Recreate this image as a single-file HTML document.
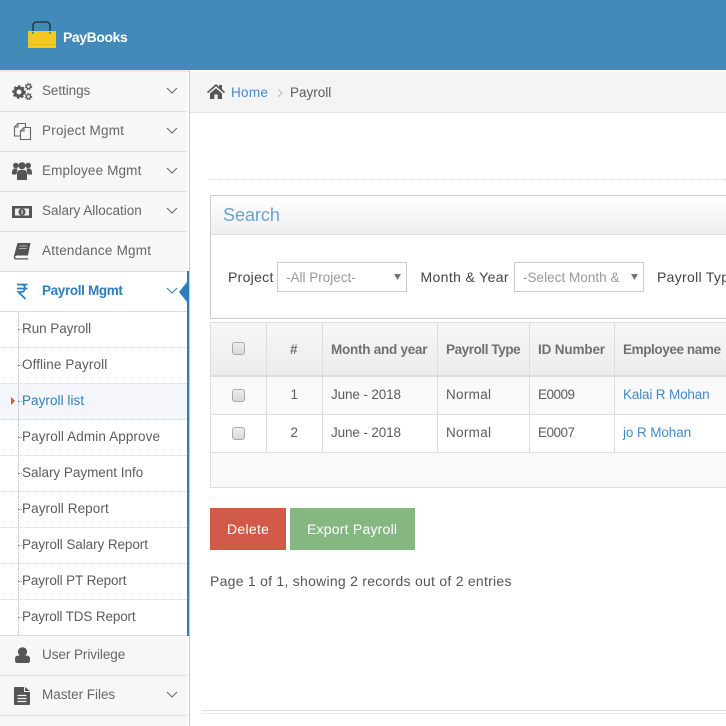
<!DOCTYPE html>
<html><head><meta charset="utf-8">
<style>
html,body{margin:0;padding:0;width:726px;height:726px;overflow:hidden;background:#fff}
body{position:relative;font-family:"Liberation Sans",sans-serif;font-size:13.5px;color:#5c5c5c}
.a{position:absolute}
.t{position:absolute;white-space:nowrap;line-height:18px;letter-spacing:.3px}
.m{position:absolute;left:0;width:187px;height:39px;background:#f7f7f7;border-bottom:1px solid #ddd}
.s{position:absolute;left:0;width:187px;height:35px;background:#fff;border-bottom:1px dotted #d4d4d4}
.h{position:absolute;left:18px;width:4px;height:0;border-top:1px dotted #999}
.cb{position:absolute;width:11px;height:11px;border:1px solid #aaa;border-radius:3px;background:linear-gradient(#eee,#d8d8d8)}
.v{position:absolute;width:1px;background:#ddd}
svg{position:absolute}
.th{color:#707070;font-weight:bold}
</style></head><body>
<div class="a" style="left:0;top:0;width:726px;height:70px;background:#428bb9"></div>
<svg style="left:26px;top:20px" width="32" height="30" viewBox="0 0 32 30"><path d="M7 11V6Q7 2 11 2H20Q24 2 24 6V11" fill="none" stroke="#1d2a33" stroke-width="1.300"/><rect x="2" y="11" width="28" height="17" fill="#f4c81c"/><rect x="2" y="24" width="28" height="1" fill="#e2bc20"/><rect x="6" y="12" width="2" height="2" fill="#5a8fa8"/><rect x="23" y="12" width="2" height="2" fill="#5a8fa8"/></svg>
<div class="t" style="left:63px;top:28px;color:#fff;font-weight:bold;font-size:14px;letter-spacing:-.42px">PayBooks</div>

<div class="a" style="left:0;top:70px;width:187px;height:656px;background:#f7f7f7"></div>
<div class="a" style="left:189px;top:70px;width:1px;height:656px;background:#ccc"></div>
<div class="a" style="left:0;top:70px;width:189px;height:2px;background:#e8e8e8"></div>

<div class="m" style="top:72px"></div><div class="m" style="top:112px"></div><div class="m" style="top:152px"></div><div class="m" style="top:192px"></div><div class="m" style="top:232px"></div>
<div class="a" style="left:0;top:272px;width:187px;height:39px;background:#fff;border-bottom:1px solid #ddd"></div>
<div class="s" style="top:312px"></div><div class="s" style="top:348px"></div><div class="s" style="top:384px;background:#f4f6fb"></div><div class="s" style="top:420px"></div><div class="s" style="top:456px"></div><div class="s" style="top:492px"></div><div class="s" style="top:528px"></div><div class="s" style="top:564px"></div><div class="a" style="left:0;top:600px;width:187px;height:35px;background:#fff;border-bottom:1px solid #ddd"></div>
<div class="m" style="top:636px"></div><div class="m" style="top:676px"></div>

<div class="a" style="left:187px;top:271px;width:2px;height:365px;background:#2d7ebd"></div>
<svg style="left:179px;top:281px" width="10" height="22"><path d="M0 11L8 1V21Z" fill="#2d7ebd"/></svg>
<div class="a" style="left:18px;top:312px;height:323px;border-left:1px dotted #8fbde0"></div>

<div class="t" style="left:42px;top:82px;color:#666;letter-spacing:-.07px">Settings</div>
<div class="t" style="left:42px;top:122px;color:#666;letter-spacing:.22px">Project Mgmt</div>
<div class="t" style="left:42px;top:162px;color:#666;letter-spacing:.15px">Employee Mgmt</div>
<div class="t" style="left:42px;top:202px;color:#666;letter-spacing:0">Salary Allocation</div>
<div class="t" style="left:42px;top:242px;color:#666;letter-spacing:.23px">Attendance Mgmt</div>
<div class="t" style="left:42px;top:282px;color:#2d7ebd;font-weight:bold;letter-spacing:-.35px">Payroll Mgmt</div>
<div class="t" style="left:22px;top:320px;letter-spacing:-.06px">Run Payroll</div>
<div class="t" style="left:22px;top:356px;letter-spacing:.1px">Offline Payroll</div>
<div class="t" style="left:22px;top:392px;color:#2d7ebd;letter-spacing:.05px">Payroll list</div>
<div class="t" style="left:22px;top:428px;letter-spacing:.11px">Payroll Admin Approve</div>
<div class="t" style="left:22px;top:464px;letter-spacing:-.02px">Salary Payment Info</div>
<div class="t" style="left:22px;top:500px;letter-spacing:.09px">Payroll Report</div>
<div class="t" style="left:22px;top:536px;letter-spacing:-.08px">Payroll Salary Report</div>
<div class="t" style="left:22px;top:572px;letter-spacing:-.11px">Payroll PT Report</div>
<div class="t" style="left:22px;top:608px;letter-spacing:-.14px">Payroll TDS Report</div>
<div class="t" style="left:42px;top:646px;color:#666;letter-spacing:-.06px">User Privilege</div>
<div class="t" style="left:42px;top:686px;color:#666;letter-spacing:-.03px">Master Files</div>
<div class="h" style="top:329px"></div><div class="h" style="top:365px"></div><div class="h" style="top:401px"></div><div class="h" style="top:437px"></div><div class="h" style="top:473px"></div><div class="h" style="top:509px"></div><div class="h" style="top:545px"></div><div class="h" style="top:581px"></div><div class="h" style="top:617px"></div>
<svg style="left:10px;top:397px" width="6" height="8"><path d="M1 0L5 4L1 8Z" fill="#c8603a"/></svg>

<svg style="left:166px;top:87px" width="12" height="8"><path d="M1 1L6 6L11 1" fill="none" stroke="#666" stroke-width="1"/></svg>
<svg style="left:166px;top:127px" width="12" height="8"><path d="M1 1L6 6L11 1" fill="none" stroke="#666" stroke-width="1"/></svg>
<svg style="left:166px;top:167px" width="12" height="8"><path d="M1 1L6 6L11 1" fill="none" stroke="#666" stroke-width="1"/></svg>
<svg style="left:166px;top:207px" width="12" height="8"><path d="M1 1L6 6L11 1" fill="none" stroke="#666" stroke-width="1"/></svg>
<svg style="left:166px;top:287px" width="12" height="8"><path d="M1 1L6 6L11 1" fill="none" stroke="#2d7ebd" stroke-width="1"/></svg>
<svg style="left:166px;top:691px" width="12" height="8"><path d="M1 1L6 6L11 1" fill="none" stroke="#666" stroke-width="1"/></svg>

<svg style="left:12px;top:82px" width="21" height="19" viewBox="0 0 21 19"><circle cx="7" cy="10" r="4" fill="none" stroke="#555" stroke-width="3"/><circle cx="7" cy="10" r="6" fill="none" stroke="#555" stroke-width="1.500" stroke-dasharray="2.500 2"/><circle cx="16.500" cy="4.500" r="2" fill="none" stroke="#555" stroke-width="1.300"/><circle cx="16.500" cy="4.500" r="3.200" fill="none" stroke="#555" stroke-width="1" stroke-dasharray="1.500 1.200"/><circle cx="16.500" cy="14.500" r="2" fill="none" stroke="#555" stroke-width="1.300"/><circle cx="16.500" cy="14.500" r="3.200" fill="none" stroke="#555" stroke-width="1" stroke-dasharray="1.500 1.200"/></svg>
<svg style="left:13px;top:121px" width="19" height="20" viewBox="0 0 19 20"><path d="M7 15H1.500V6L5 2.500H12.500V6.500M5 2.500V6H1.500" fill="none" stroke="#666" stroke-width="1.100"/><path d="M7.500 18.500V10L11 6.500H17.500V18.500Z M11 6.500V10H7.500" fill="none" stroke="#666" stroke-width="1.100"/></svg>
<svg style="left:12px;top:162px" width="20" height="18" viewBox="0 0 20 18"><circle cx="3.800" cy="3.500" r="2.800" fill="#555"/><circle cx="16.200" cy="3.500" r="2.800" fill="#555"/><circle cx="10" cy="3.800" r="3.600" fill="#555"/><path d="M0 11Q0 6.500 3 6.500H5.500L4.500 12.500H0ZM20 11Q20 6.500 17 6.500H14.500L15.500 12.500H20Z" fill="#555"/><path d="M5 18V12Q5 8 8 8H12Q15 8 15 12V18Z" fill="#555"/></svg>
<svg style="left:12px;top:205px" width="20" height="14" viewBox="0 0 20 14"><rect x="0" y="1" width="20" height="12" fill="#555"/><rect x="3" y="3.500" width="14" height="7" fill="#eee"/><circle cx="10" cy="7" r="3.500" fill="#555"/><rect x="9.500" y="5" width="1.200" height="4" fill="#eee"/></svg>
<svg style="left:13px;top:243px" width="18" height="17" viewBox="0 0 18 17"><path d="M4.500 0H17.500L15 12.500H4Q2.200 12.500 2.200 14Q2.200 15.300 4 15.300H15.500L15 16.500H3Q0.500 16.500 0.800 13.500Z" fill="#555"/><path d="M6.500 3H14M6 5.500H13.500" stroke="#ccc" stroke-width=".8"/></svg>
<svg style="left:15px;top:282px" width="14" height="18" viewBox="0 0 14 18"><path d="M2 2.500H12.500M2 6.500H12.500M3 2.500H6.500Q9.800 2.500 9.800 6Q9.800 10 6 10H3.500L10.500 17" fill="none" stroke="#2d7ebd" stroke-width="1.800"/></svg>
<svg style="left:15px;top:647px" width="15" height="16" viewBox="0 0 15 16"><circle cx="7.500" cy="4.800" r="4.600" fill="#555"/><path d="M0 13.500V12Q0 8.500 3.500 8.500H11.500Q15 8.500 15 12V13.500Q15 16 12.500 16H2.500Q0 16 0 13.500Z" fill="#555"/></svg>
<svg style="left:14px;top:686px" width="16" height="19" viewBox="0 0 16 19"><path d="M1 1H10V6H16V18Q16 19 15 19H1Q0 19 0 18V2Q0 1 1 1ZM11 1L16 5H11Z" fill="#555"/><path d="M3.500 9.500H12.500M3.500 12.500H12.500M3.500 15.500H12.500" stroke="#f0f0f0" stroke-width="1.300"/></svg>

<div class="a" style="left:190px;top:72px;width:536px;height:40px;background:#f4f4f4;border-bottom:1px solid #e4e4e4"></div>
<svg style="left:207px;top:84px" width="18" height="15" viewBox="0 0 18 15"><path d="M0 8L9 0L12 2.700V1H15V5.300L18 8L17 9.300L9 2.300L1 9.300Z" fill="#555"/><path d="M3 9.500L9 4.300L15 9.500V15H10.700V10.500H7.300V15H3Z" fill="#555"/></svg>
<div class="t" style="left:231px;top:84px;color:#428bca">Home</div>
<svg style="left:277px;top:88px" width="6" height="10"><path d="M1 1L5 5L1 9" fill="none" stroke="#bbb"/></svg>
<div class="t" style="left:290px;top:84px;letter-spacing:0">Payroll</div>

<div class="a" style="left:210px;top:179px;width:516px;border-top:1px dotted #ddd"></div>

<div class="a" style="left:210px;top:195px;width:516px;height:122px;border:1px solid #ccc;border-right:none"></div>
<div class="a" style="left:211px;top:196px;width:515px;height:38px;background:linear-gradient(#fff,#eee);border-bottom:1px solid #ddd"></div>
<div class="t" style="left:223px;top:204px;color:#6ba3cc;font-size:18px;line-height:22px;letter-spacing:-.03px">Search</div>
<div class="t" style="left:228px;top:268px;color:#444;font-size:14px">Project</div>
<div class="a" style="left:277px;top:262px;width:128px;height:28px;border:1px solid #ccc"></div>
<div class="t" style="left:286px;top:269px;color:#999;letter-spacing:0">-All Project-</div>
<svg style="left:394px;top:274px" width="7" height="6"><path d="M0 0H7L3.500 6Z" fill="#777"/></svg>
<div class="t" style="left:420.500px;top:268px;color:#444;font-size:14px;letter-spacing:.36px">Month &amp; Year</div>
<div class="a" style="left:514px;top:262px;width:128px;height:28px;border:1px solid #ccc"></div>
<div class="t" style="left:523px;top:269px;color:#999;letter-spacing:.03px">-Select Month &amp;</div>
<svg style="left:631px;top:274px" width="7" height="6"><path d="M0 0H7L3.500 6Z" fill="#777"/></svg>
<div class="t" style="left:657px;top:268px;color:#444;font-size:14px">Payroll Typ</div>

<div class="a" style="left:210px;top:322px;width:516px;height:165px;border:1px solid #ddd;border-right:none;box-sizing:border-box"></div>
<div class="a" style="left:211px;top:323px;width:515px;height:52px;background:linear-gradient(#f7f7f7,#ececec);border-bottom:2px solid #ddd"></div>
<div class="a" style="left:211px;top:377px;width:515px;height:37px;background:#f9f9f9;border-bottom:1px solid #ddd"></div>
<div class="a" style="left:211px;top:415px;width:515px;height:37px;background:#fff;border-bottom:1px solid #ddd"></div>
<div class="a" style="left:211px;top:453px;width:515px;height:34px;background:#f9f9f9"></div>
<div class="a" style="left:210px;top:487px;width:516px;height:1px;background:#ddd"></div>
<div class="v" style="left:266px;top:323px;height:129px"></div><div class="v" style="left:322px;top:323px;height:129px"></div><div class="v" style="left:437px;top:323px;height:129px"></div><div class="v" style="left:529px;top:323px;height:129px"></div><div class="v" style="left:614px;top:323px;height:129px"></div>
<div class="cb" style="left:232px;top:342px"></div><div class="cb" style="left:232px;top:389px"></div><div class="cb" style="left:232px;top:427px"></div>
<div class="t th" style="left:290px;top:341px;letter-spacing:0">#</div>
<div class="t th" style="left:331px;top:341px;letter-spacing:-.25px">Month and year</div>
<div class="t th" style="left:446px;top:341px;letter-spacing:-.42px">Payroll Type</div>
<div class="t th" style="left:538px;top:341px;letter-spacing:-.15px">ID Number</div>
<div class="t th" style="left:623px;top:341px;letter-spacing:-.4px">Employee name</div>
<div class="t" style="left:290.500px;top:386px">1</div><div class="t" style="left:290.500px;top:424px">2</div>
<div class="t" style="left:331px;top:386px;letter-spacing:-.13px">June - 2018</div><div class="t" style="left:331px;top:424px;letter-spacing:-.13px">June - 2018</div>
<div class="t" style="left:446px;top:386px">Normal</div><div class="t" style="left:446px;top:424px">Normal</div>
<div class="t" style="left:538px;top:386px;letter-spacing:-.5px">E0009</div><div class="t" style="left:538px;top:424px;letter-spacing:-.5px">E0007</div>
<div class="t" style="left:623px;top:386px;color:#428bca;letter-spacing:-.16px">Kalai R Mohan</div><div class="t" style="left:623px;top:424px;color:#428bca;letter-spacing:-.1px">jo R Mohan</div>

<div class="a" style="left:210px;top:508px;width:76px;height:42px;background:#d25a48"></div>
<div class="t" style="left:227px;top:520px;color:#fff;font-size:14px">Delete</div>
<div class="a" style="left:290px;top:508px;width:125px;height:42px;background:#85b880"></div>
<div class="t" style="left:307px;top:520px;color:#fff;font-size:14px;letter-spacing:.22px">Export Payroll</div>
<div class="t" style="left:210px;top:572px;color:#555;font-size:14px;letter-spacing:.26px">Page 1 of 1, showing 2 records out of 2 entries</div>

<div class="a" style="left:202px;top:710px;width:524px;height:2px;border-top:1px solid #ddd;border-bottom:1px solid #e8e8e8"></div>
</body></html>
